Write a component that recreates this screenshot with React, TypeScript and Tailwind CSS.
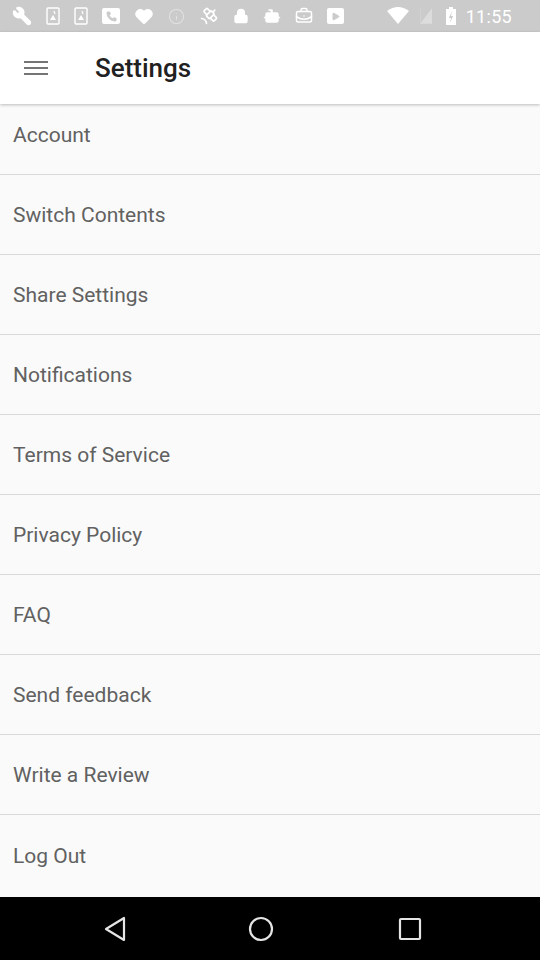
import React from "react";
import { Wrench, Heart, Info, Satellite, Lock, Bot, BriefcaseBusiness, Play, Phone } from "lucide-react";

const items = [
  "Account",
  "Switch Contents",
  "Share Settings",
  "Notifications",
  "Terms of Service",
  "Privacy Policy",
  "FAQ",
  "Send feedback",
  "Write a Review",
  "Log Out",
];

const font = { fontFamily: '"Roboto", "Liberation Sans", sans-serif' };

const PhotoBadge: React.FC = () => (
  <svg width="14" height="18" viewBox="0 0 14 18" fill="none">
    <rect x="1" y="1" width="12" height="16" rx="1" stroke="white" strokeWidth="1.4" />
    <path d="M4 13 L7 8 L10 13 Z" fill="white" />
    <path d="M8 4 L9 7" stroke="white" strokeWidth="1.2" />
  </svg>
);

const StatusBar: React.FC = () => (
  <div className="h-[32px] bg-[#cbcbcb] flex items-center pl-[12px] pr-[28px] text-white">
    <div className="flex items-center gap-[14px]">
      <Wrench size={20} fill="white" strokeWidth={2} className="-scale-x-100" />
      <PhotoBadge />
      <PhotoBadge />
      <div className="w-[18px] h-[16px] bg-white rounded-[2px] flex items-center justify-center">
        <Phone size={11} className="text-[#cbcbcb]" fill="#cbcbcb" />
      </div>
      <Heart size={20} fill="white" strokeWidth={1} />
      <Info size={17} strokeWidth={1.5} className="text-[#e2e2e2]" />
      <Satellite size={20} strokeWidth={2} />
      <Lock size={16} fill="white" strokeWidth={2} />
      <Bot size={18} fill="white" strokeWidth={2} />
      <BriefcaseBusiness size={18} strokeWidth={2} />
      <div className="w-[17px] h-[16px] bg-white rounded-[2px] flex items-center justify-center">
        <Play size={9} className="text-[#cbcbcb]" fill="#cbcbcb" />
      </div>
    </div>
    <div className="ml-auto flex items-center gap-[10px]">
      <svg width="24" height="18" viewBox="0 0 22 18">
        <path d="M0 4 Q11 -4 22 4 L11 17 Z" fill="white" />
      </svg>
      <svg width="12" height="18" viewBox="0 0 14 18">
        <path d="M0 18 L14 0 L14 18 Z" fill="#dcdcdc" />
        <path d="M0 0 L0 18" stroke="#dcdcdc" />
      </svg>
      <svg width="10" height="18" viewBox="0 0 10 18" className="ml-[4px]">
        <rect x="3" y="0" width="4" height="2" fill="white" />
        <rect x="0" y="2" width="10" height="16" fill="white" />
        <path d="M6 4 L3 11 L5 11 L4 16 L7 9 L5 9 Z" fill="#cbcbcb" />
      </svg>
      <span className="text-[18px] tracking-[0.3px]" style={font}>
        11:55
      </span>
    </div>
  </div>
);

const NavBar: React.FC = () => (
  <div className="h-[63px] bg-black flex items-center pl-[103px] gap-[121px]">
    <svg width="24" height="26" viewBox="0 0 24 26" fill="none">
      <path d="M21 2 L21 24 L3 13 Z" stroke="#e5e5e5" strokeWidth="2.2" strokeLinejoin="round" />
    </svg>
    <svg width="26" height="26" viewBox="0 0 26 26" fill="none">
      <circle cx="13" cy="13" r="11" stroke="#e5e5e5" strokeWidth="2.2" />
    </svg>
    <svg width="24" height="24" viewBox="0 0 24 24" fill="none" className="ml-[3px]">
      <rect x="2" y="2" width="20" height="20" rx="1" stroke="#e5e5e5" strokeWidth="2.2" />
    </svg>
  </div>
);

export default function App() {
  return (
    <div className="w-[540px] h-[960px] flex flex-col bg-[#fafafa] overflow-hidden" style={font}>
      <StatusBar />
      <div className="h-[72px] bg-white flex items-center shadow-[0_1px_3px_rgba(0,0,0,0.25)] relative z-10">
        <div className="w-[95px] pl-[24px]">
          <div className="w-[24px] flex flex-col gap-[4px]">
            <div className="h-[2px] bg-[#757575]" />
            <div className="h-[2px] bg-[#757575]" />
            <div className="h-[2px] bg-[#757575]" />
          </div>
        </div>
        <h1 className="text-[26px] text-[#212121] font-medium">Settings</h1>
      </div>
      <div className="flex-1 flex flex-col">
        {items.map((label, i) => (
          <div
            key={label}
            className={`flex items-center px-[13px] text-[21px] text-[#616161] ${
              i === 0 ? "h-[71px] pb-[6px]" : "h-[80px] pt-[3px]"
            } ${i < items.length - 1 ? "border-b-[1.5px] border-[#d9d9d9]" : ""}`}
          >
            {label}
          </div>
        ))}
      </div>
      <NavBar />
    </div>
  );
}
